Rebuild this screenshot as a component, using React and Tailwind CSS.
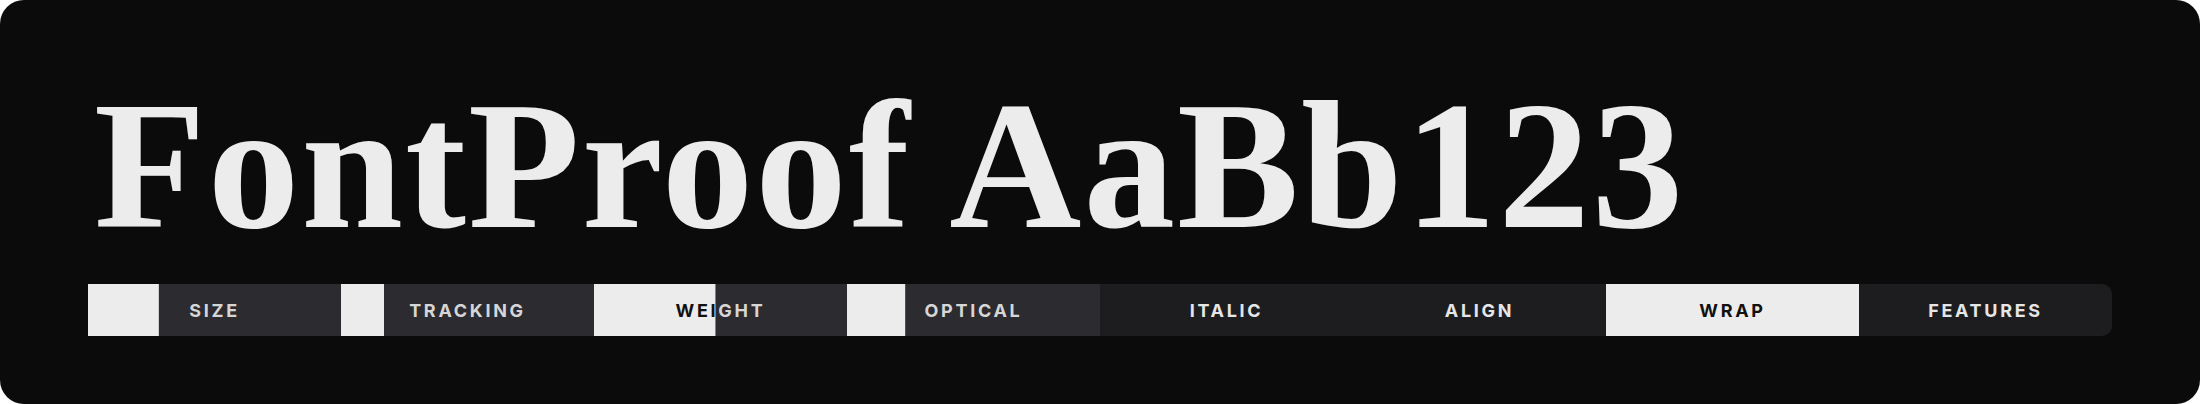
import React from 'react'

const tabs = [
  { label: 'Size', progress: 28 },
  { label: 'Tracking', progress: 17 },
  { label: 'Weight', progress: 48 },
  { label: 'Optical', progress: 23 },
  { label: 'Italic' },
  { label: 'Align' },
  { label: 'Wrap', active: true },
  { label: 'Features' },
]

const labelClass =
  "text-[18px] font-bold uppercase tracking-[0.15em] font-['Inter','Liberation_Sans',sans-serif]"

const Tab = ({ tab }) => {
  if (tab.active) {
    return (
      <div className="flex-1 flex items-center justify-center bg-[#ececec]">
        <span className={`${labelClass} text-[#111111]`}>{tab.label}</span>
      </div>
    )
  }

  if (tab.progress == null) {
    return (
      <div className="flex-1 flex items-center justify-center">
        <span className={`${labelClass} text-[#e6e6e6]`}>{tab.label}</span>
      </div>
    )
  }

  // progress tabs: fill on the left, label colour flips where the fill ends
  return (
    <div className="relative flex-1 bg-[#2c2b30]">
      <div className="h-full flex items-center justify-center">
        <span className={`${labelClass} text-[#d6d6d6]`}>{tab.label}</span>
      </div>
      <div
        className="absolute inset-0 flex items-center justify-center bg-[#ececec]"
        style={{ clipPath: `inset(0 ${100 - tab.progress}% 0 0)` }}
      >
        <span className={`${labelClass} text-[#111111]`}>{tab.label}</span>
      </div>
    </div>
  )
}

const App = () => {
  return (
    <div className="w-[2200px] h-[404px] bg-white">
      <div className="h-full rounded-[24px] bg-[#0b0b0b] px-[88px] pt-[74px] flex flex-col">
        {/* Specimen line */}
        <h1 className="pl-[6px] text-[183px] leading-none font-bold tracking-[2px] text-[#ececec] whitespace-nowrap font-['Liberation_Serif','Times_New_Roman',serif]">
          FontProof AaBb123
        </h1>

        {/* Axis tabs */}
        <div className="mt-[27px] h-[52px] flex rounded-[10px] bg-[#1d1d1f]">
          {tabs.map((tab) => (
            <Tab key={tab.label} tab={tab} />
          ))}
        </div>
      </div>
    </div>
  )
}

export default App
